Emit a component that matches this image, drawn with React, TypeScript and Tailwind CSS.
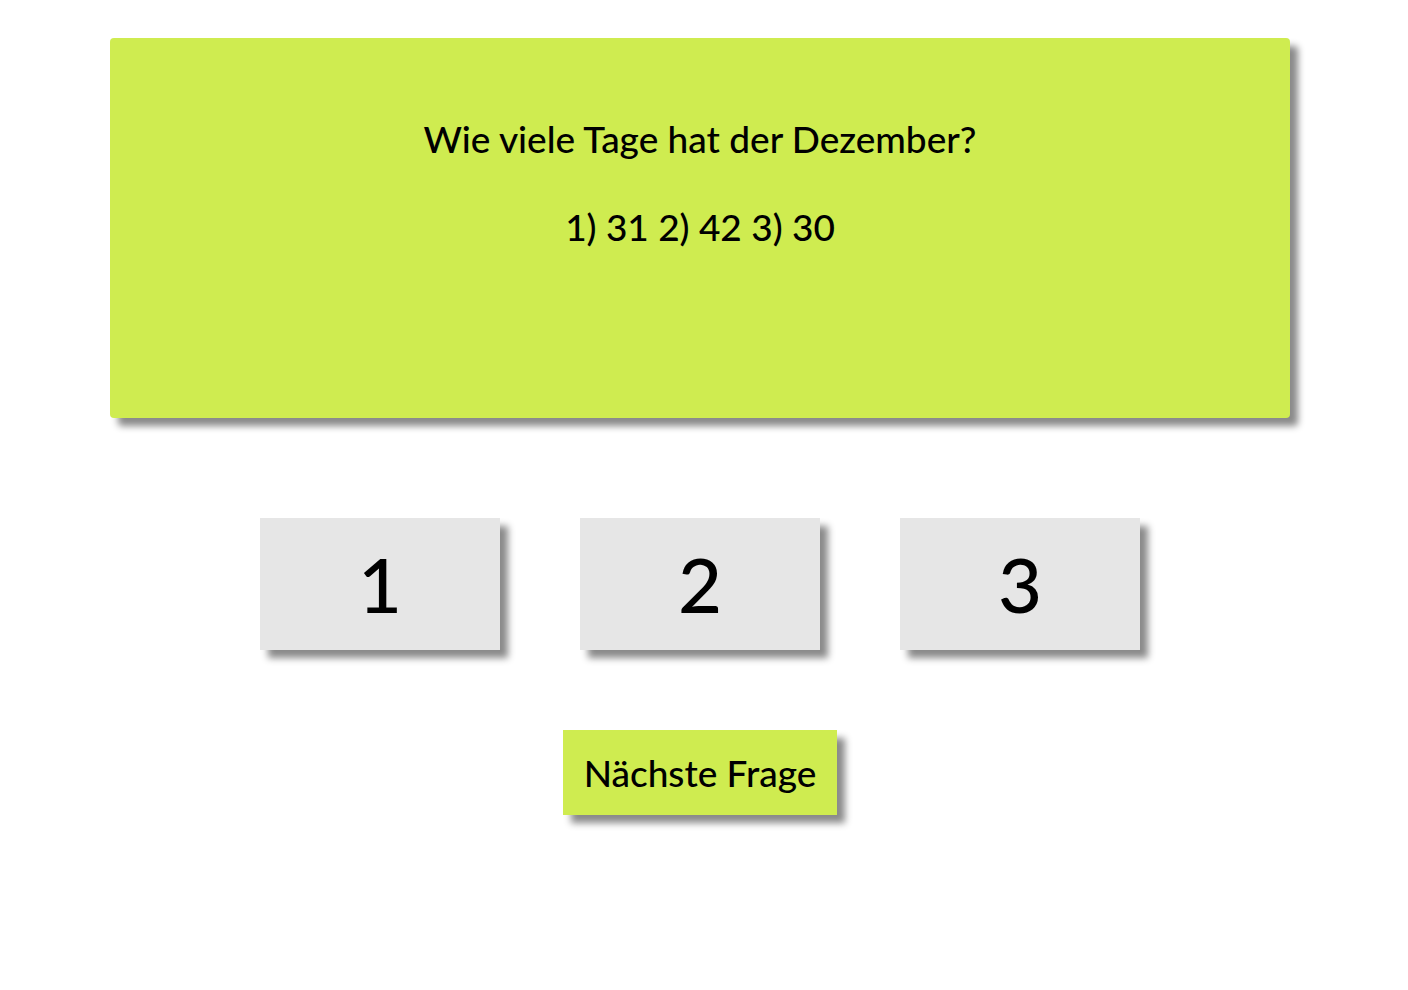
import React from "react";

const answers = ["1", "2", "3"];

export default function App() {
  return (
    <div className="min-h-[990px] w-full bg-white pt-[38px] font-['Lato',sans-serif] font-medium text-black">
      <div className="ml-[110px] w-[1180px]">
        {/* question card */}
        <div className="h-[380px] rounded-[4px] bg-[#cfec50] pt-[77px] text-center shadow-[8px_8px_7px_#8a8a8a]">
          <p className="text-[37px] leading-[48px]">Wie viele Tage hat der Dezember?</p>
          <p className="mt-[40px] text-[37px] leading-[48px]">1) 31 2) 42 3) 30</p>
        </div>

        {/* answer buttons */}
        <div className="mt-[100px] flex justify-center gap-[80px]">
          {answers.map((a) => (
            <button
              key={a}
              type="button"
              className="flex h-[132px] w-[240px] items-center justify-center bg-[#e6e6e6] text-[76px] leading-none shadow-[8px_8px_7px_#8a8a8a]"
            >
              {a}
            </button>
          ))}
        </div>

        <div className="mt-[80px] flex justify-center">
          <button
            type="button"
            className="flex h-[85px] w-[274px] items-center justify-center bg-[#cfec50] text-[37px] shadow-[8px_8px_7px_#8a8a8a]"
          >
            Nächste Frage
          </button>
        </div>
      </div>
    </div>
  );
}
